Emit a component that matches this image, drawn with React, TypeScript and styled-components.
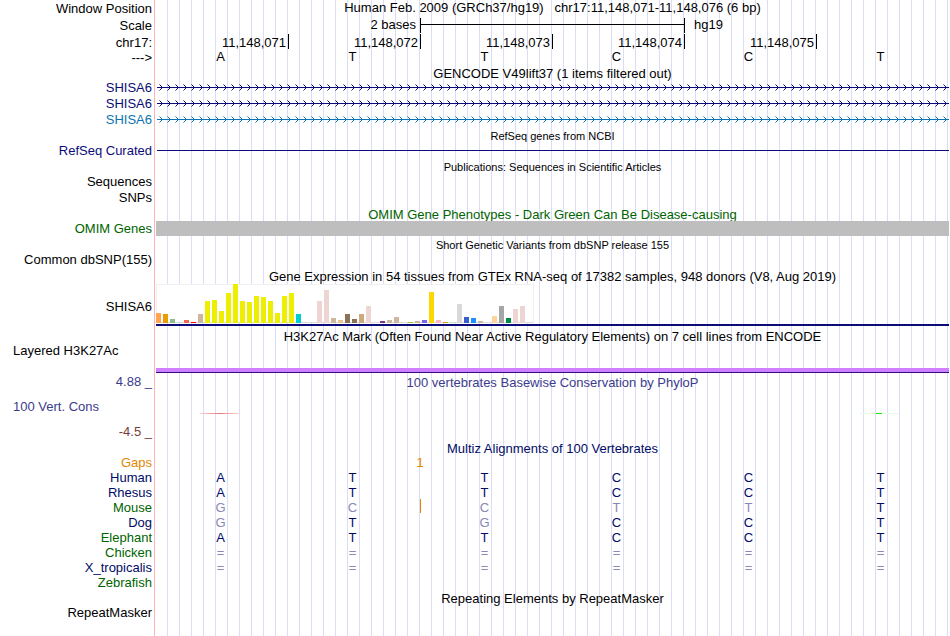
import React from "react";
import styled, { createGlobalStyle } from "styled-components";

const navy = "#0c0c78";
const deepNavy = "#000b66";
const skyBlue = "#0c74b0";
const green = "#006400";
const slate = "#3c3c8c";
const maroon = "#783c3c";
const orange = "#e68600";
const faded = "#8888b4";

const GlobalStyle = createGlobalStyle`
  body {
    margin: 0;
    background: #fff;
    color: #000;
    font: 13px/15px "Liberation Sans", Arial, sans-serif;
  }
`;

const Page = styled.main`
  box-sizing: border-box;
  min-height: 100vh;
  padding-right: 1px;
  background:
    linear-gradient(#ffb4b4, #ffb4b4) 154px 0 / 1px 100% no-repeat,
    repeating-linear-gradient(
        to right,
        transparent 0 11px,
        #dcdcf7 11px 12px
      )
      156px 0 / calc(100% - 156px) 100% no-repeat;
`;

const Row = styled.div<{ $height?: number }>`
  display: grid;
  grid-template-columns: 156px minmax(0, 1fr);
  height: ${(p) => p.$height ?? 16}px;
`;

const Label = styled.div<{ $color?: string; $left?: boolean; $middle?: boolean }>`
  padding: ${(p) => (p.$middle ? 17 : 1)}px 4px 0 13px;
  text-align: ${(p) => (p.$left ? "left" : "right")};
  color: ${(p) => p.$color ?? "#000"};
  white-space: nowrap;
`;

const Title = styled.h2<{ $color?: string; $small?: boolean; $top?: boolean }>`
  grid-column: 2;
  margin: 0;
  padding-top: ${(p) => (p.$top ? 0 : 2)}px;
  font-size: ${(p) => (p.$small ? 11 : 13)}px;
  font-weight: 400;
  text-align: center;
  white-space: pre;
  color: ${(p) => p.$color ?? "#000"};
`;

const BaseGrid = styled.div<{ $low?: boolean }>`
  display: grid;
  grid-template-columns: repeat(6, minmax(0, 1fr));
  align-items: start;
  padding: ${(p) => (p.$low ? 1 : 0)}px 1px 0 0;
`;

const Base = styled.span<{ $column: number; $color?: string }>`
  grid-row: 1;
  grid-column: ${(p) => p.$column};
  padding-right: 3px;
  text-align: center;
  color: ${(p) => p.$color ?? "#000"};
`;

const Between = styled.span`
  grid-row: 1;
  grid-column: 2 / 4;
  justify-self: center;
  color: ${orange};
`;

const Insertion = styled(Between)`
  width: 1px;
  height: 14px;
  margin: -1px -1px 0 0;
  background: ${orange};
`;

const Tick = styled.span`
  box-sizing: border-box;
  height: 15px;
  margin-right: -1px;
  padding: 1px 2px 0 0;
  border-right: 1px solid #000;
  text-align: right;
`;

const ScaleText = styled.span<{ $end?: boolean }>`
  grid-column: span 2;
  padding: 0 4px 0 10px;
  text-align: ${(p) => (p.$end ? "left" : "right")};
`;

const ScaleBar = styled.span`
  box-sizing: border-box;
  grid-column: span 2;
  height: 15px;
  margin: 1px -1px 0 0;
  border: solid #000;
  border-width: 0 1px;
  background: linear-gradient(#000, #000) 0 6px / 100% 1px no-repeat;
`;

const GeneLine = styled.svg`
  display: block;
  width: calc(100% - 1px);
  height: 16px;
  margin-left: 1px;
`;

const SolidLine = styled.div`
  height: 1px;
  margin: 8px 0 0 1px;
  background: ${navy};
`;

const GrayBar = styled.div`
  position: relative;
  height: 15px;
  margin-top: 1px;
  background: #bebebe;
`;

const Expression = styled.div`
  display: flex;
  flex-direction: column;
  padding-top: 2px;
  height: 40px;
  border-bottom: 2px solid ${navy};
`;

const Bars = styled.div`
  display: flex;
  align-items: flex-end;
  align-self: flex-start;
  box-sizing: border-box;
  gap: 2px;
  height: 39px;
  padding-right: 2px;
  background:
    linear-gradient(#f0f0f0, #f0f0f0) 0 0 / 100% 1px no-repeat,
    linear-gradient(#f0f0f0, #f0f0f0) 0 0 / 1px 100% no-repeat,
    linear-gradient(#f0f0f0, #f0f0f0) 100% 0 / 1px 100% no-repeat,
    linear-gradient(#dcdcdc, #dcdcdc) 0 100% / 100% 1px no-repeat,
    #fff;
`;

const Bar = styled.div<{ $h: number; $c: string }>`
  width: 5px;
  height: ${(p) => p.$h}px;
  background: ${(p) => p.$c};
`;

const Signal = styled.div`
  align-self: end;
  height: 4px;
  border-bottom: 1px solid #320a82;
  background: #d080ff;
`;

const ConsLabels = styled.div`
  display: flex;
  flex-direction: column;
  justify-content: space-between;
  height: 66px;
`;

const Wiggle = styled(BaseGrid)`
  padding-top: 23px;
`;

const Score = styled.span<{ $column: number; $paint: string }>`
  grid-column: ${(p) => p.$column};
  justify-self: center;
  width: 39px;
  height: 1px;
  margin-right: 6px;
  background: ${(p) => p.$paint};
`;

const tan = "#cdb79e";
const yellow = "#eeee00";
const pink = "#eed5d2";

const tissues: [number, string][] = [
  [10, "#ffa54f"], [9, "#ee9a00"], [4, "#8fbc8f"], [0, "#8b1c62"], [3, "#ee6a50"],
  [1, "#ff0000"], [9, tan], [22, yellow], [23, yellow], [12, yellow], [30, yellow],
  [39, yellow], [22, yellow], [21, yellow], [27, yellow], [26, yellow], [22, yellow],
  [10, yellow], [27, yellow], [30, yellow], [9, "#00cdcd"], [0, pink], [0, pink],
  [22, pink], [33, pink], [5, tan], [3, "#eec591"], [9, "#8b7355"], [4, "#8b7355"],
  [9, "#cdaa7d"], [17, pink], [0, pink], [2, "#7a378b"], [3, tan], [6, tan], [0, tan],
  [1, "#9acd32"], [2, tan], [3, "#7a67ee"], [31, "#ffd700"], [3, "#ffb6c1"],
  [1, "#cd9b1d"], [1, "#b4eeb4"], [19, "#d9d9d9"], [6, "#3a5fcd"], [5, "#1e90ff"],
  [2, tan], [0, tan], [7, "#ffd39b"], [17, "#a6a6a6"], [5, "#008b45"], [14, pink],
  [17, pink], [0, pink],
];

const positions = ["11,148,071", "11,148,072", "11,148,073", "11,148,074", "11,148,075"];

const genes = [navy, navy, skyBlue];

/* Lower-case letters mark bases that differ from the human sequence. */
const species = [
  { name: "Human", color: deepNavy, bases: "ATTCCT" },
  { name: "Rhesus", color: deepNavy, bases: "ATTCCT" },
  { name: "Mouse", color: green, bases: "gccttT", insertion: true },
  { name: "Dog", color: deepNavy, bases: "gTgCCT" },
  { name: "Elephant", color: green, bases: "ATTCCT" },
  { name: "Chicken", color: green, bases: "======" },
  { name: "X_tropicalis", color: deepNavy, bases: "======" },
  { name: "Zebrafish", color: green, bases: "" },
];

function TitleRow({ text, color, small }: { text: string; color?: string; small?: boolean }) {
  return (
    <Row $height={15}>
      <Title $color={color} $small={small}>{text}</Title>
    </Row>
  );
}

function Gene({ color, id }: { color: string; id: string }) {
  return (
    <Row>
      <Label $color={color}>SHISA6</Label>
      <GeneLine aria-hidden="true">
        <defs>
          <pattern id={id} width="8" height="16" patternUnits="userSpaceOnUse">
            <path d="M2.5 5.5 L5.5 8.5 L2.5 11.5" fill="none" stroke={color} strokeWidth="1" />
          </pattern>
        </defs>
        <rect width="100%" height="16" fill={`url(#${id})`} />
        <rect y="8" width="100%" height="1" fill={color} />
      </GeneLine>
    </Row>
  );
}

export default function App() {
  return (
    <>
      <GlobalStyle />
      <Page>
        <Row $height={17}>
          <Label>Window Position</Label>
          <Title $top>{"Human Feb. 2009 (GRCh37/hg19)   chr17:11,148,071-11,148,076 (6 bp)"}</Title>
        </Row>
        <Row $height={17}>
          <Label>Scale</Label>
          <BaseGrid>
            <ScaleText>2 bases</ScaleText>
            <ScaleBar />
            <ScaleText $end>hg19</ScaleText>
          </BaseGrid>
        </Row>
        <Row $height={15}>
          <Label>chr17:</Label>
          <BaseGrid>
            {positions.map((p) => <Tick key={p}>{p}</Tick>)}
          </BaseGrid>
        </Row>
        <Row $height={15}>
          <Label>---&gt;</Label>
          <BaseGrid>
            {"ATTCCT".split("").map((b, i) => <Base key={i} $column={i + 1}>{b}</Base>)}
          </BaseGrid>
        </Row>

        <TitleRow text="GENCODE V49lift37 (1 items filtered out)" />
        {genes.map((color, i) => <Gene key={i} color={color} id={`strand-${i}`} />)}

        <TitleRow small text="RefSeq genes from NCBI" />
        <Row>
          <Label $color={navy}>RefSeq Curated</Label>
          <SolidLine />
        </Row>

        <TitleRow small text="Publications: Sequences in Scientific Articles" />
        <Row><Label>Sequences</Label></Row>
        <Row><Label>SNPs</Label></Row>

        <TitleRow color={green} text="OMIM Gene Phenotypes - Dark Green Can Be Disease-causing" />
        <Row>
          <Label $color={green}>OMIM Genes</Label>
          <GrayBar />
        </Row>

        <TitleRow small text="Short Genetic Variants from dbSNP release 155" />
        <Row><Label>Common dbSNP(155)</Label></Row>

        <TitleRow text="Gene Expression in 54 tissues from GTEx RNA-seq of 17382 samples, 948 donors (V8, Aug 2019)" />
        <Row $height={45}>
          <Label $middle>SHISA6</Label>
          <Expression>
            <Bars>
              {tissues.map(([h, c], i) => <Bar key={i} $h={h} $c={c} />)}
            </Bars>
          </Expression>
        </Row>

        <TitleRow text="H3K27Ac Mark (Often Found Near Active Regulatory Elements) on 7 cell lines from ENCODE" />
        <Row $height={31}>
          <Label $left>Layered H3K27Ac</Label>
          <Signal />
        </Row>

        <Row $height={66}>
          <ConsLabels>
            <Label $color={slate}>4.88 _</Label>
            <Label $color={slate} $left>100 Vert. Cons</Label>
            <Label $color={maroon}>-4.5 _</Label>
          </ConsLabels>
          <div>
            <Title $color={slate}>100 vertebrates Basewise Conservation by PhyloP</Title>
            <Wiggle>
              <Score $column={1} $paint="linear-gradient(to right, #fbd5d5, #e87878 50%, #fbd5d5)" />
              <Score
                $column={6}
                $paint="linear-gradient(to right, #e6fae6 16px, #14e614 16px 22px, #e6fae6 22px)"
              />
            </Wiggle>
          </div>
        </Row>

        <TitleRow color={deepNavy} text="Multiz Alignments of 100 Vertebrates" />
        <Row $height={15}>
          <Label $color={orange}>Gaps</Label>
          <BaseGrid $low><Between>1</Between></BaseGrid>
        </Row>
        {species.map((s) => (
          <Row key={s.name} $height={15}>
            <Label $color={s.color}>{s.name}</Label>
            <BaseGrid $low>
              {s.bases.split("").map((b, i) => (
                <Base key={i} $column={i + 1} $color={/[A-Z]/i.test(b) && b === b.toUpperCase() ? deepNavy : faded}>
                  {b.toUpperCase()}
                </Base>
              ))}
              {s.insertion && <Insertion />}
            </BaseGrid>
          </Row>
        ))}

        <TitleRow text="Repeating Elements by RepeatMasker" />
        <Row><Label>RepeatMasker</Label></Row>
      </Page>
    </>
  );
}
